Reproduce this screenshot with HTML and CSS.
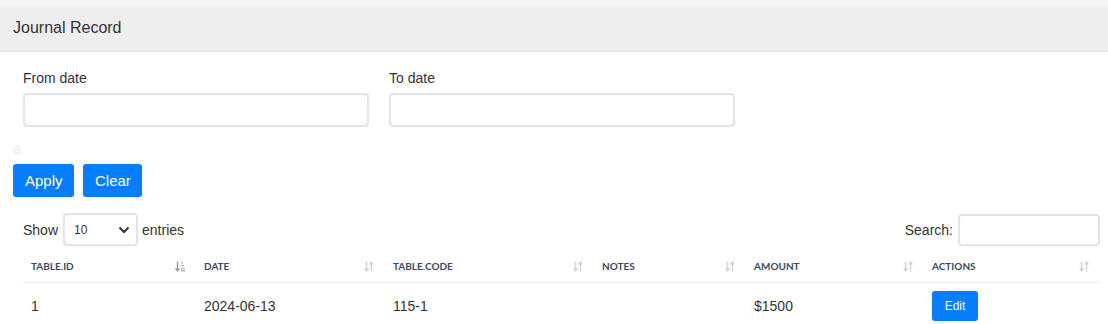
FILE: index.html
```html
<!DOCTYPE html>
<html>
<head>
<meta charset="utf-8">
<link rel="stylesheet" href="styles.css">
</head>
<body>
<div class="page">
  <div class="card">
    <div class="card-header">Journal Record</div>
    <div class="card-body">
      <div class="filters">
        <div class="field">
          <label class="field-label">From date</label>
          <input class="field-input" type="text">
        </div>
        <div class="field">
          <label class="field-label">To date</label>
          <input class="field-input" type="text">
        </div>
      </div>
      <div class="ghost">a</div>
      <div class="actions">
        <button class="btn btn-apply">Apply</button>
        <button class="btn btn-clear">Clear</button>
      </div>
      <div class="dt">
        <div class="dt-top">
          <div class="dt-length">Show
            <span class="select"><span>10</span>
              <svg class="chev" width="12" height="8" viewBox="0 0 12 8"><path d="M1.5 1.5 L6 6 L10.5 1.5" fill="none" stroke="#333" stroke-width="2"/></svg>
            </span> entries</div>
          <div class="dt-search">Search: <input class="search-input" type="text"></div>
        </div>
        <table class="table">
          <colgroup>
            <col class="c1"><col class="c2"><col class="c3"><col class="c4"><col class="c5"><col class="c6">
          </colgroup>
          <thead>
            <tr>
              <th><span class="th-in">TABLE.ID<svg class="sort" width="10" height="11" viewBox="0 0 10 11"><path d="M2.5 0.5V9.5M0.5 7.5L2.5 9.8L4.5 7.5" fill="none" stroke="#9aa0a8" stroke-width="1.5"/><rect x="6" y="1" width="2" height="1.5" fill="#b8bcc2"/><rect x="6" y="4" width="3" height="1.5" fill="#b8bcc2"/><rect x="6" y="7" width="4" height="1.5" fill="#b8bcc2"/><rect x="6" y="9" width="4" height="1.5" fill="#b8bcc2"/></svg></span></th>
              <th><span class="th-in">DATE<svg class="sort" width="10" height="11" viewBox="0 0 10 11"><path d="M2.5 0.5V9.5M0.5 7.5L2.5 9.8L4.5 7.5M7.5 10.5V1.5M5.5 3.5L7.5 1.2L9.5 3.5" fill="none" stroke="#d2d4d8" stroke-width="1.5"/></svg></span></th>
              <th><span class="th-in">TABLE.CODE<svg class="sort" width="10" height="11" viewBox="0 0 10 11"><path d="M2.5 0.5V9.5M0.5 7.5L2.5 9.8L4.5 7.5M7.5 10.5V1.5M5.5 3.5L7.5 1.2L9.5 3.5" fill="none" stroke="#d2d4d8" stroke-width="1.5"/></svg></span></th>
              <th><span class="th-in">NOTES<svg class="sort" width="10" height="11" viewBox="0 0 10 11"><path d="M2.5 0.5V9.5M0.5 7.5L2.5 9.8L4.5 7.5M7.5 10.5V1.5M5.5 3.5L7.5 1.2L9.5 3.5" fill="none" stroke="#d2d4d8" stroke-width="1.5"/></svg></span></th>
              <th><span class="th-in">AMOUNT<svg class="sort" width="10" height="11" viewBox="0 0 10 11"><path d="M2.5 0.5V9.5M0.5 7.5L2.5 9.8L4.5 7.5M7.5 10.5V1.5M5.5 3.5L7.5 1.2L9.5 3.5" fill="none" stroke="#d2d4d8" stroke-width="1.5"/></svg></span></th>
              <th><span class="th-in">ACTIONS<svg class="sort" width="10" height="11" viewBox="0 0 10 11"><path d="M2.5 0.5V9.5M0.5 7.5L2.5 9.8L4.5 7.5M7.5 10.5V1.5M5.5 3.5L7.5 1.2L9.5 3.5" fill="none" stroke="#d2d4d8" stroke-width="1.5"/></svg></span></th>
            </tr>
          </thead>
          <tbody>
            <tr>
              <td>1</td>
              <td>2024-06-13</td>
              <td>115-1</td>
              <td></td>
              <td>$1500</td>
              <td><button class="btn btn-sm">Edit</button></td>
            </tr>
          </tbody>
        </table>
      </div>
    </div>
  </div>
</div>
</body>
</html>
```

FILE: styles.css
```css
* { box-sizing: border-box; }
html, body { margin: 0; padding: 0; }
body {
  font-family: "Liberation Sans", Arial, sans-serif;
  color: #333;
  background: #fff;
  font-size: 14px;
}
.page {
  padding-top: 6px;
  background: #f3f4f6;
}
.card {
  background: #fff;
}
.card-header {
  height: 46px;
  background: #eeeeee;
  border-bottom: 1px solid #e2e2e2;
  padding-left: 13px;
  font-size: 16px;
  line-height: 43px;
  color: #333;
}
.card-body {
  padding: 0 8px 0 13px;
}
.filters {
  display: flex;
  gap: 20px;
  padding: 16px 10px 0;
}
.field {
  display: flex;
  flex-direction: column;
  width: 346px;
}
.field-label {
  font-size: 14px;
  line-height: 20px;
  margin-bottom: 5px;
}
.field-input {
  height: 34px;
  border: 2px solid #dfe3ee;
  border-radius: 4px;
  background: #fff;
  outline: none;
}
.ghost {
  color: #deedfd;
  font-size: 14px;
  line-height: 20px;
  margin-top: 12px;
}
.actions {
  display: flex;
  gap: 9px;
  margin-top: 5px;
}
.btn {
  height: 33px;
  padding: 0 12px;
  background: #057dfd;
  color: #fff;
  border: none;
  border-radius: 3px;
  font-family: "Liberation Sans", Arial, sans-serif;
  font-size: 15px;
}
.btn-apply { width: 61px; }
.btn-clear { width: 59px; }
.btn-sm {
  width: 46px;
  height: 30px;
  font-size: 12px;
  padding: 0;
  border-radius: 3px;
}
.dt {
  padding: 0 0 0 10px;
}
.dt-top {
  display: flex;
  justify-content: space-between;
  align-items: center;
  margin-top: 16px;
  height: 33px;
}
.dt-length {
  display: flex;
  align-items: center;
  gap: 4px;
  font-size: 14px;
}
.select {
  display: inline-flex;
  align-items: center;
  justify-content: space-between;
  width: 75px;
  height: 33px;
  border: 2px solid #dfe3ee;
  border-radius: 4px;
  padding: 0 6px 0 9px;
  font-size: 12px;
  margin: 0 0 0 1px;
}
.dt-search {
  display: flex;
  align-items: center;
  gap: 5px;
  font-size: 14px;
}
.search-input {
  width: 142px;
  height: 32px;
  border: 2px solid #dfe3ee;
  border-radius: 4px;
  outline: none;
}
.table {
  width: 1077px;
  border-collapse: collapse;
  table-layout: fixed;
  margin-top: 4px;
}
.c1 { width: 173px; }
.c2 { width: 189px; }
.c3 { width: 209px; }
.c4 { width: 152px; }
.c5 { width: 178px; }
.c6 { width: 176px; }
.table th {
  font-family: Lato, "Liberation Sans", sans-serif;
  font-weight: 700;
  font-size: 10px;
  color: #3c4862;
  text-align: left;
  height: 32px;
  padding: 0 8px;
  border-bottom: 1px solid #eceef2;
}
.th-in {
  display: flex;
  justify-content: space-between;
  align-items: center;
  padding-top: 1px;
}
.sort { margin-right: 3px; }
.table td {
  font-size: 14px;
  color: #333;
  height: 48px;
  padding: 0 8px;
  vertical-align: middle;
}
```
